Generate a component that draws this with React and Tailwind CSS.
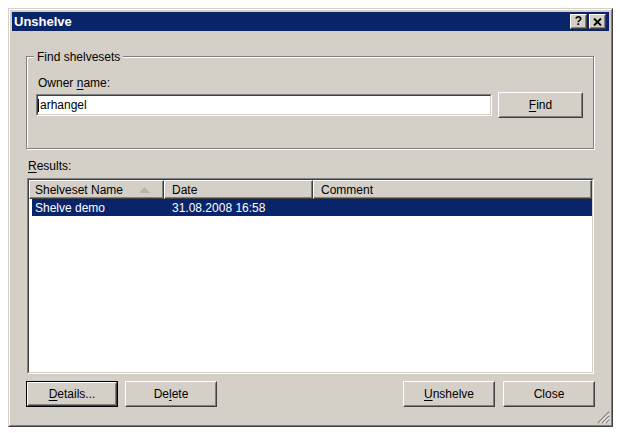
import React from "react";

function Raised({ className = "", children, isDefault = false }) {
  const inner = (
    <div className="w-full h-full border border-t-white border-l-white border-r-[#404040] border-b-[#404040] bg-[#d4d0c8]">
      <div className="w-full h-full border border-t-[#d4d0c8] border-l-[#d4d0c8] border-r-[#808080] border-b-[#808080] flex items-center justify-center pt-[1px]">
        {children}
      </div>
    </div>
  );
  if (isDefault) {
    return <div className={`border border-black ${className}`}>{inner}</div>;
  }
  return <div className={className}>{inner}</div>;
}

function U({ children }) {
  return <span className="underline underline-offset-[2px] decoration-1">{children}</span>;
}

function HeaderCell({ className = "", children }) {
  return (
    <div className={`h-full border border-t-white border-l-white border-r-[#404040] border-b-[#404040] shadow-[inset_-1px_-1px_0_#808080] bg-[#d4d0c8] flex items-center pt-[1px] ${className}`}>
      {children}
    </div>
  );
}

export default function App() {
  return (
    <div className="w-[620px] h-[433px] bg-white overflow-hidden pt-[8px] pl-[8px] font-['Liberation_Sans',Arial,sans-serif] text-[12px] text-black leading-[15px]">
      <div className="w-[605px] h-[419px] border border-t-[#d4d0c8] border-l-[#d4d0c8] border-r-[#404040] border-b-[#404040]">
        <div className="relative h-full border border-t-white border-l-white border-r-[#808080] border-b-[#808080] bg-[#d4d0c8] p-[2px] flex flex-col">
          {/* Title bar */}
          <div className="h-[19px] bg-[#0a246a] flex items-center justify-between pl-[2px] pr-[3px]">
            <span className="text-white font-bold text-[13px] leading-[19px]">Unshelve</span>
            <div className="flex gap-[2px]">
              <Raised className="w-[17px] h-[15px]">
                <span className="font-bold text-[12px] leading-[12px] -mt-[2px]">?</span>
              </Raised>
              <Raised className="w-[17px] h-[15px]">
                <svg className="-mt-[1px]" width="9" height="8" viewBox="0 0 9 8">
                  <path d="M1 0.5 L8 7.5 M8 0.5 L1 7.5" stroke="#000" strokeWidth="1.8" />
                </svg>
              </Raised>
            </div>
          </div>

          {/* Body */}
          <div className="flex-1 flex flex-col">
            <div className="pl-[14px] pr-[15px]">
              {/* Group box */}
              <div className="relative mt-[25px] h-[93px] border border-[#808080] shadow-[inset_1px_1px_0_#fff,1px_1px_0_#fff] pl-[9px] pr-[10px] pt-[19px]">
                <span className="absolute -top-[7px] left-[7px] px-[3px] bg-[#d4d0c8] leading-[14px]">Find shelvesets</span>
                <div className="ml-[2px] leading-[15px]">Owner <U>n</U>ame:</div>
                <div className="mt-[1px] h-[26px] flex items-center gap-[6px]">
                  <div className="flex-1 h-[22px] border border-t-[#808080] border-l-[#808080] border-r-white border-b-white">
                    <div className="h-full border border-t-[#404040] border-l-[#404040] border-r-[#d4d0c8] border-b-[#d4d0c8] bg-white flex items-center pt-[1px]">
                      <span className="w-[1px] h-[13px] bg-black"></span>
                      <span className="ml-[1px]">arhangel</span>
                    </div>
                  </div>
                  <Raised className="w-[85px] h-[26px]">
                    <span><U>F</U>ind</span>
                  </Raised>
                </div>
              </div>

              <div className="mt-[10px] ml-[2px] h-[15px] leading-[15px]"><U>R</U>esults:</div>

              {/* List view */}
              <div className="mt-[4px] ml-[1px] h-[196px] border border-t-[#808080] border-l-[#808080] border-r-white border-b-white">
                <div className="h-full border border-t-[#404040] border-l-[#404040] border-r-[#d4d0c8] border-b-[#d4d0c8] bg-white flex flex-col">
                  <div className="h-[19px] flex">
                    <HeaderCell className="w-[135px] pl-[5px]">
                      <span>Shelveset Name</span>
                      <svg className="ml-[16px]" width="11" height="6" viewBox="0 0 11 6">
                        <polygon points="5.5,0 11,6 0,6" fill="#b9b5a3" />
                      </svg>
                    </HeaderCell>
                    <HeaderCell className="w-[149px] pl-[7px]">Date</HeaderCell>
                    <HeaderCell className="flex-1 pl-[7px]">Comment</HeaderCell>
                  </div>
                  <div className="h-[17px] ml-[3px] bg-[#0a246a] text-white flex items-center pt-[1px]">
                    <span className="w-[132px] pl-[3px]">Shelve demo</span>
                    <span className="pl-[8px]">31.08.2008 16:58</span>
                  </div>
                </div>
              </div>
            </div>

            {/* Buttons */}
            <div className="mt-[7px] pl-[14px] pr-[14px] flex items-center">
              <Raised isDefault className="w-[92px] h-[26px]">
                <span><U>D</U>etails...</span>
              </Raised>
              <Raised className="ml-[7px] w-[92px] h-[26px]">
                <span>De<U>l</U>ete</span>
              </Raised>
              <div className="flex-1"></div>
              <Raised className="w-[92px] h-[26px]">
                <span><U>U</U>nshelve</span>
              </Raised>
              <Raised className="ml-[8px] w-[92px] h-[26px]">
                <span>Close</span>
              </Raised>
            </div>
          </div>

          {/* Resize grip */}
          <svg className="absolute right-[1px] bottom-[1px]" width="13" height="13" viewBox="0 0 13 13">
            <path d="M12 1 L1 12 M12 5 L5 12 M12 9 L9 12" stroke="#808080" strokeWidth="1.2" />
            <path d="M12 2.5 L2.5 12 M12 6.5 L6.5 12 M12 10.5 L10.5 12" stroke="#ffffff" strokeWidth="1" />
          </svg>
        </div>
      </div>
    </div>
  );
}
